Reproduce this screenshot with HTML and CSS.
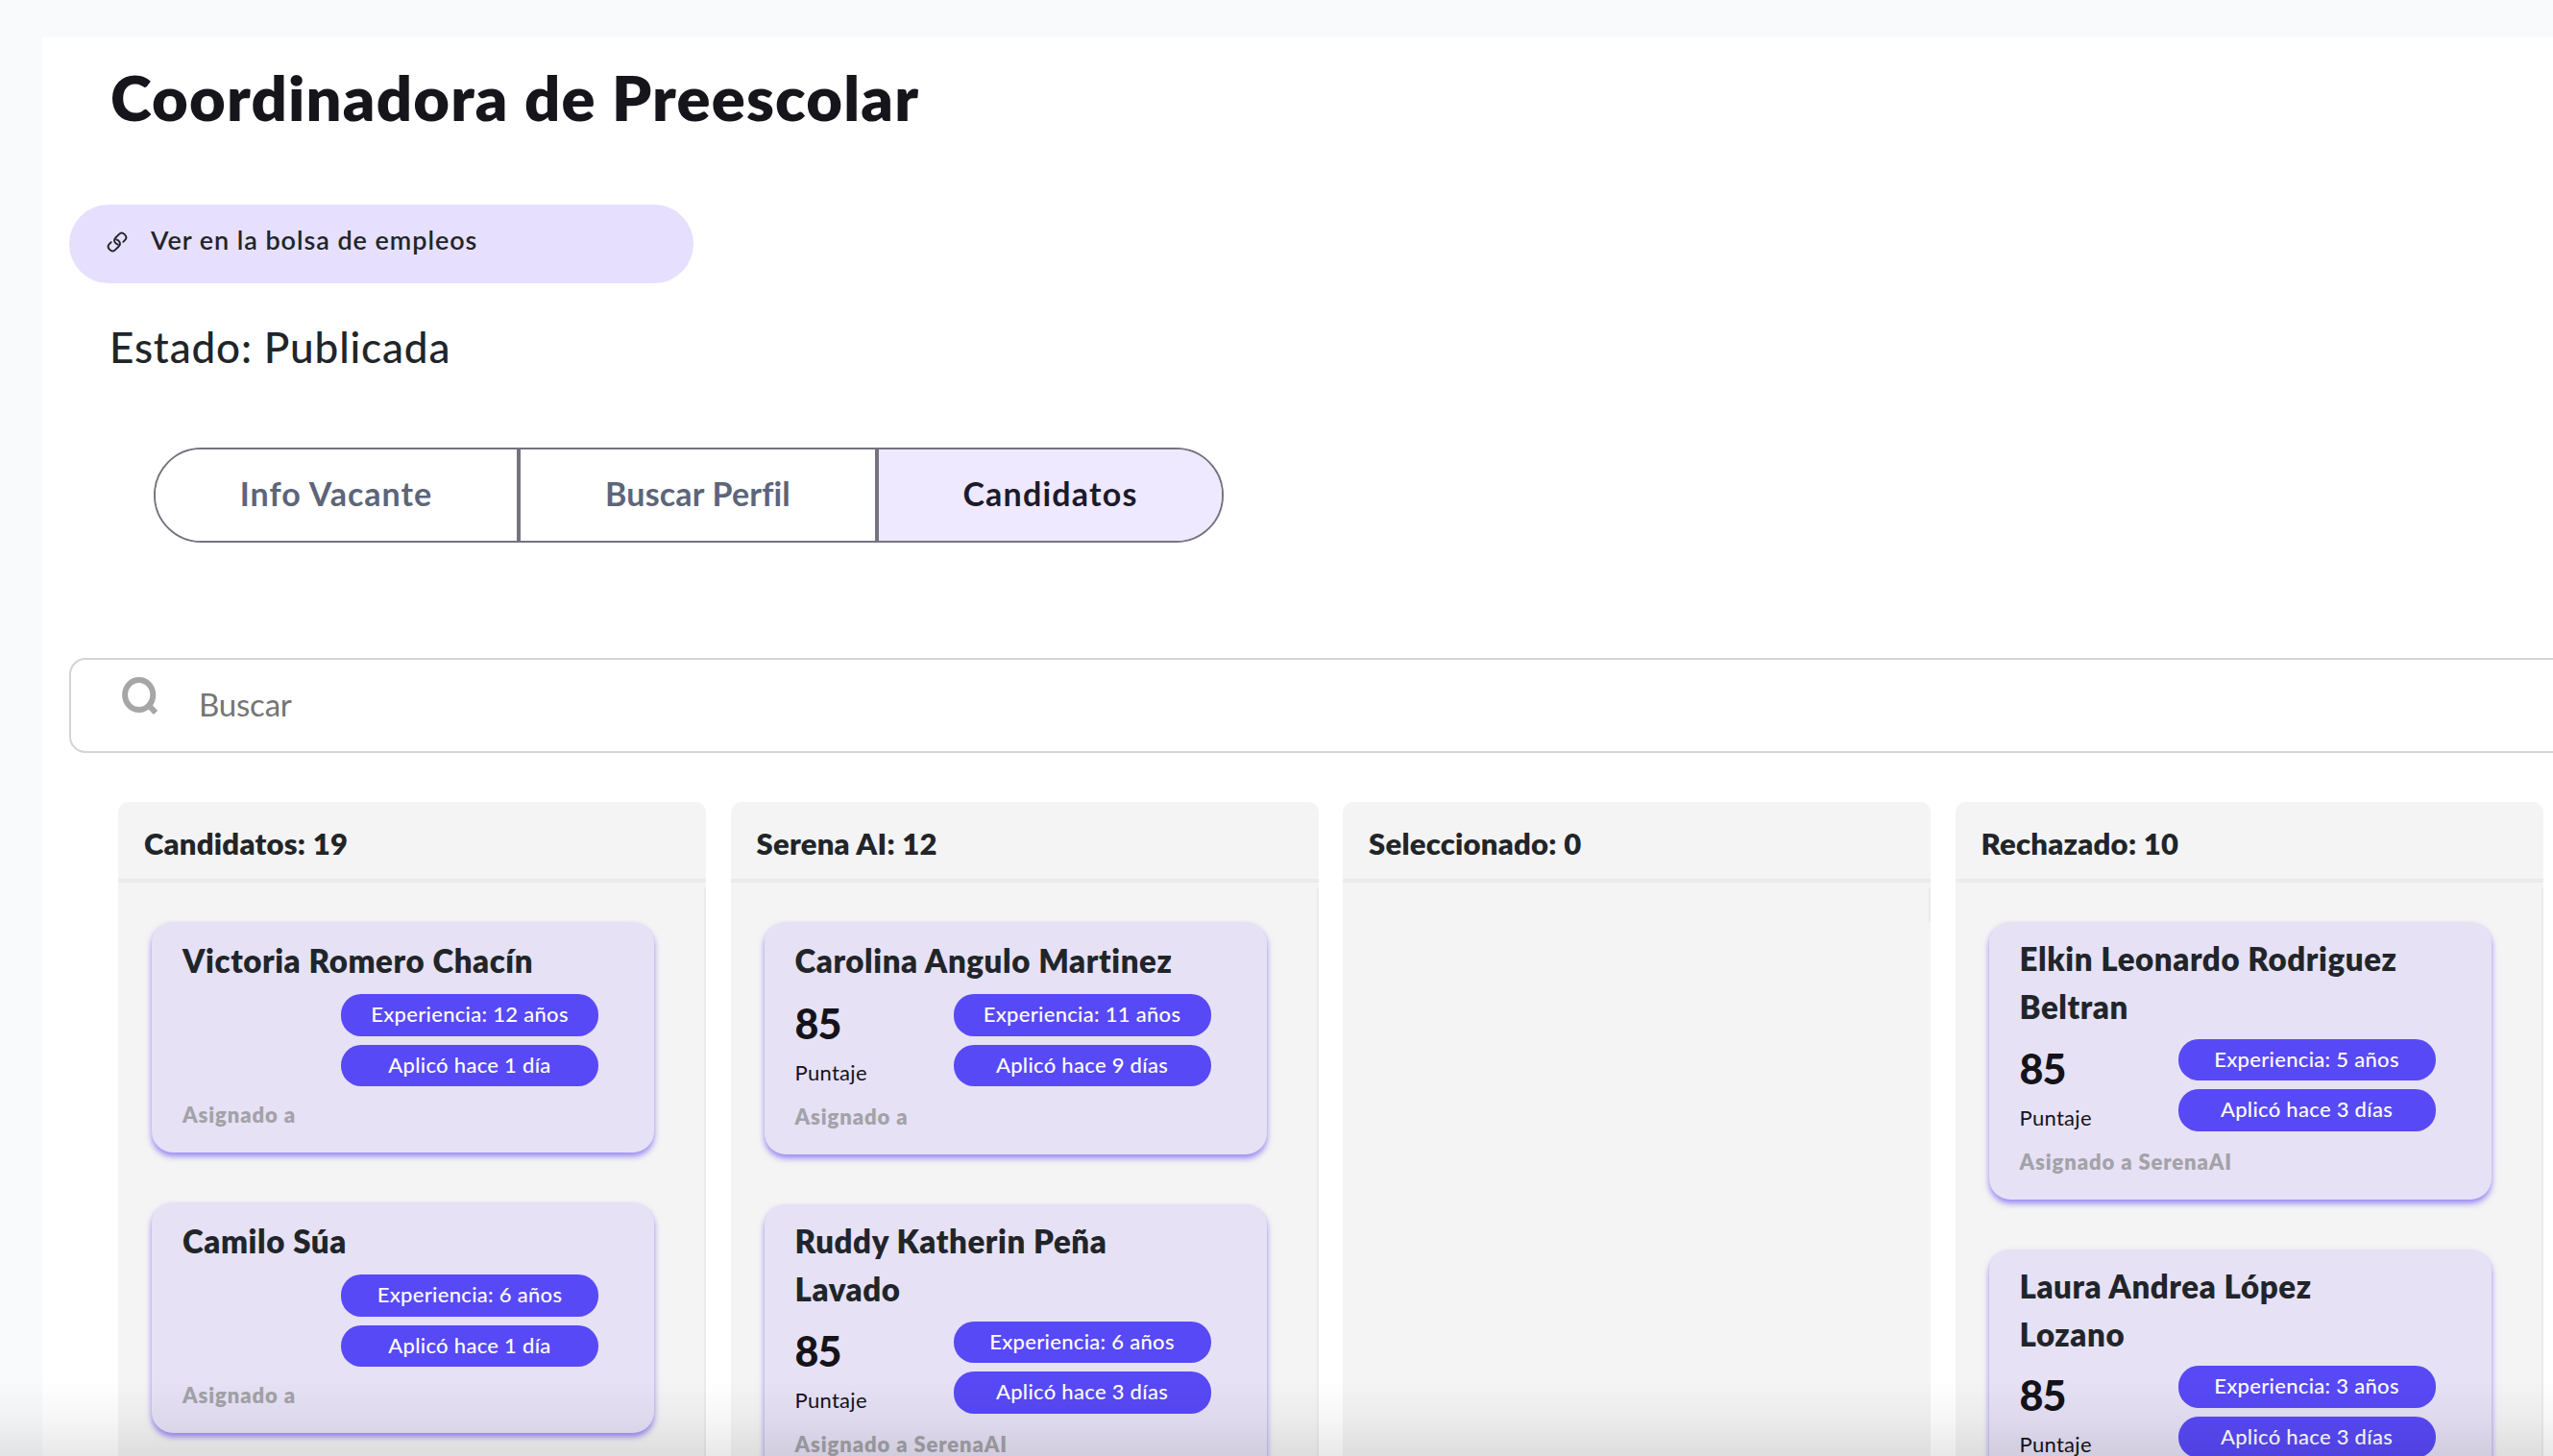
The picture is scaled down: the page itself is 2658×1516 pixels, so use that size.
FILE: index.html
```
<!DOCTYPE html>
<html lang="es">
<head>
    <meta charset="UTF-8">
    <meta name="viewport" content="width=device-width, initial-scale=1.0">
    <title>Coordinadora de Preescolar</title>
    <link rel="stylesheet" href="styles.css">
</head>
<body>
    <main class="panel">
        <h1 class="title">Coordinadora de Preescolar</h1>
        <a class="job-link" href="#">
            <svg class="link-icon" viewBox="0 0 22 22" fill="none" stroke="currentColor" stroke-width="1.9" stroke-linecap="round">
                <path d="M11.9 13.6C8.2 12.6 6.9 9 9.3 6.5L13 2.8C16.6 -0.8 22.8 5.2 19.2 8.9L17.3 10.8"/>
                <path d="M10.1 8.4C13.8 9.4 15.1 13 12.7 15.5L9 19.2C5.4 22.8 -0.8 16.8 2.8 13.1L4.7 11.2"/>
            </svg>
            <span>Ver en la bolsa de empleos</span>
        </a>
        <p class="status">Estado: Publicada</p>

        <nav class="tabs">
            <button class="tab">Info Vacante</button>
            <button class="tab tab-profile">Buscar Perfil</button>
            <button class="tab active">Candidatos</button>
        </nav>

        <div class="search">
            <svg class="search-icon" viewBox="0 0 38 40" fill="none" stroke="currentColor" stroke-width="6">
                <ellipse cx="17.7" cy="18.5" rx="14.6" ry="15.5"/>
                <path d="M27.5 29L35 37"/>
            </svg>
            <span>Buscar</span>
        </div>

        <section class="board">
            <div class="column">
                <h2 class="column-title">Candidatos: 19</h2>
                <div class="column-body">
                    <article class="card">
                        <h3 class="name">Victoria Romero Chacín</h3>
                        <div class="details">
                            <div class="score"></div>
                            <div class="badges">
                                <span class="badge">Experiencia: 12 años</span>
                                <span class="badge">Aplicó hace 1 día</span>
                            </div>
                        </div>
                        <p class="assigned">Asignado a</p>
                    </article>
                    <article class="card">
                        <h3 class="name">Camilo Súa</h3>
                        <div class="details">
                            <div class="score"></div>
                            <div class="badges">
                                <span class="badge">Experiencia: 6 años</span>
                                <span class="badge">Aplicó hace 1 día</span>
                            </div>
                        </div>
                        <p class="assigned">Asignado a</p>
                    </article>
                </div>
            </div>

            <div class="column">
                <h2 class="column-title">Serena AI: 12</h2>
                <div class="column-body">
                    <article class="card">
                        <h3 class="name">Carolina Angulo Martinez</h3>
                        <div class="details">
                            <div class="score">
                                <strong>85</strong>
                                <span>Puntaje</span>
                            </div>
                            <div class="badges">
                                <span class="badge">Experiencia: 11 años</span>
                                <span class="badge">Aplicó hace 9 días</span>
                            </div>
                        </div>
                        <p class="assigned">Asignado a</p>
                    </article>
                    <article class="card long-name">
                        <h3 class="name">Ruddy Katherin Peña Lavado</h3>
                        <div class="details">
                            <div class="score">
                                <strong>85</strong>
                                <span>Puntaje</span>
                            </div>
                            <div class="badges">
                                <span class="badge">Experiencia: 6 años</span>
                                <span class="badge">Aplicó hace 3 días</span>
                            </div>
                        </div>
                        <p class="assigned">Asignado a SerenaAI</p>
                    </article>
                </div>
            </div>

            <div class="column">
                <h2 class="column-title">Seleccionado: 0</h2>
                <div class="column-body empty"></div>
            </div>

            <div class="column">
                <h2 class="column-title">Rechazado: 10</h2>
                <div class="column-body">
                    <article class="card long-name">
                        <h3 class="name">Elkin Leonardo Rodriguez Beltran</h3>
                        <div class="details">
                            <div class="score">
                                <strong>85</strong>
                                <span>Puntaje</span>
                            </div>
                            <div class="badges">
                                <span class="badge">Experiencia: 5 años</span>
                                <span class="badge">Aplicó hace 3 días</span>
                            </div>
                        </div>
                        <p class="assigned">Asignado a SerenaAI</p>
                    </article>
                    <article class="card long-name">
                        <h3 class="name">Laura Andrea López Lozano</h3>
                        <div class="details">
                            <div class="score">
                                <strong>85</strong>
                                <span>Puntaje</span>
                            </div>
                            <div class="badges">
                                <span class="badge">Experiencia: 3 años</span>
                                <span class="badge">Aplicó hace 3 días</span>
                            </div>
                        </div>
                    </article>
                </div>
            </div>
        </section>
    </main>
    <div class="bottom-fade"></div>
</body>
</html>
```
FILE: styles.css
```
* {
    box-sizing: border-box;
}

body {
    margin: 0;
    height: 100vh;
    padding: 39px 0 0 44px;
    background: #f9fafc;
    color: #212529;
    font-family: Lato, sans-serif;
    font-variant-ligatures: none;
    overflow: hidden;
}

.panel {
    height: 100%;
    padding: 22px 0 0 28px;
    background: #fff;
    overflow: hidden;
}

.title {
    margin: 0 0 0 43px;
    font-size: 65px;
    font-weight: 800;
    line-height: 80px;
    letter-spacing: 1.2px;
    color: #17151c;
}

.job-link {
    display: flex;
    align-items: center;
    gap: 24px;
    width: 650px;
    height: 82px;
    margin-top: 72px;
    padding: 0 0 9px 39px;
    border-radius: 41px;
    background: #e6e0fe;
    color: #212529;
    font-size: 27px;
    font-weight: 600;
    letter-spacing: 0.95px;
    text-decoration: none;
}

.link-icon {
    width: 22px;
    height: 22px;
    margin-top: 4px;
}

.status {
    margin: 39px 0 0 42px;
    font-size: 44px;
    font-weight: 500;
    line-height: 54px;
    letter-spacing: 0.85px;
}

.tabs {
    display: flex;
    width: 1114px;
    height: 99px;
    margin: 78px 0 0 88px;
    border: 2px solid #76727f;
    border-radius: 50px;
    overflow: hidden;
}

.tab {
    flex: 0 0 380px;
    padding: 0 0 4px;
    border: none;
    border-right: 4px solid #76727f;
    background: #fff;
    color: #5d6579;
    font-family: inherit;
    font-size: 34px;
    font-weight: 700;
    letter-spacing: 1px;
}

.tab-profile {
    flex-basis: 373px;
    letter-spacing: 0.2px;
}

.tab.active {
    flex: 1;
    border-right: none;
    background: #eee9fe;
    color: #1c1a2b;
    letter-spacing: 1.2px;
}

.search {
    display: flex;
    align-items: center;
    gap: 42px;
    width: 2700px;
    height: 99px;
    margin-top: 120px;
    padding: 0 0 3px 53px;
    border: 2px solid #d4d4d4;
    border-radius: 17px;
    color: #757575;
    font-size: 33px;
    letter-spacing: -0.2px;
}

.search-icon {
    width: 38px;
    height: 40px;
    margin-bottom: 16px;
    color: #a6a6a6;
}

.board {
    display: flex;
    gap: 25.5px;
    height: 800px;
    margin: 51px 0 0 51px;
}

.column {
    display: flex;
    flex: 0 0 612px;
    flex-direction: column;
    border-radius: 11px 11px 0 0;
    background: #f4f4f4;
}

.column-title {
    margin: 0;
    padding: 23px 27px 17px;
    border-bottom: 4px solid #ebebeb;
    font-size: 31px;
    font-weight: 800;
    line-height: 40px;
    letter-spacing: 0.25px;
}

.column-body {
    display: flex;
    flex: 1;
    flex-direction: column;
    gap: 52px;
    margin-top: 5px;
    padding: 36px 0 0 35px;
    border-right: 2px solid #ebebeb;
}

.column-body.empty {
    flex: 0 0 36px;
}

.card {
    width: 523px;
    padding: 15px 0 22px 32px;
    border-radius: 22px;
    background: #e6e1f5;
    box-shadow: 0 4px 6px rgba(88, 64, 240, 0.6);
}

.name {
    max-width: 415px;
    margin: 0 0 10px;
    font-size: 33px;
    font-weight: 800;
    line-height: 50px;
    letter-spacing: 0.6px;
}

.long-name {
    padding-top: 13px;
}

.long-name .name {
    margin-bottom: 8.5px;
}

.details {
    display: grid;
    grid-template-columns: 165px 268px;
    min-height: 100px;
}

.score {
    display: flex;
    flex-direction: column;
    color: #15131a;
}

.score strong {
    font-size: 43px;
    font-weight: 900;
    line-height: 62px;
    letter-spacing: -1px;
}

.score span {
    margin-top: -1px;
    font-size: 22px;
    line-height: 41px;
    letter-spacing: 0.3px;
}

.badges {
    display: flex;
    flex-direction: column;
    gap: 9px;
}

.badge {
    height: 43.5px;
    border-radius: 21px;
    background: #5849f6;
    color: #fff;
    font-size: 22px;
    font-weight: 500;
    line-height: 42px;
    letter-spacing: 0.3px;
    text-align: center;
}

.assigned {
    margin: 9px 0 0;
    color: #a3a2a8;
    font-size: 22px;
    font-weight: 800;
    line-height: 34px;
    letter-spacing: 0.9px;
}

/* shade along the bottom of the window */
.bottom-fade {
    position: fixed;
    right: 0;
    bottom: 0;
    left: 0;
    height: 80px;
    background: linear-gradient(rgba(0, 0, 0, 0), rgba(0, 0, 0, 0.03) 50%, rgba(0, 0, 0, 0.09));
    pointer-events: none;
}
```
